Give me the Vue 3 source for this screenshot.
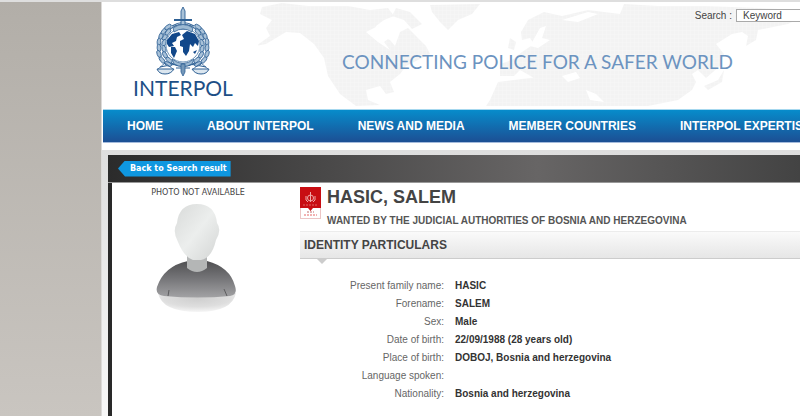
<script setup>
const menu = ['HOME', 'ABOUT INTERPOL', 'NEWS AND MEDIA', 'MEMBER COUNTRIES', 'INTERPOL EXPERTISE']
const facts = [
  ['Present family name:', 'HASIC'],
  ['Forename:', 'SALEM'],
  ['Sex:', 'Male'],
  ['Date of birth:', '22/09/1988 (28 years old)'],
  ['Place of birth:', 'DOBOJ, Bosnia and herzegovina'],
  ['Language spoken:', ''],
  ['Nationality:', 'Bosnia and herzegovina'],
]
const leaves = [
  [5, 29, 110], [3, 35, 95], [3, 41, 85], [3, 47, 70], [6, 53, 50], [12, 57, 25],
  [9, 30, 125], [8, 36, 110], [8, 42, 75], [9, 48, 60], [13, 53, 40], [8, 24, 130], [12, 20, 145], [12, 25, 130],
]
</script>

<template>
  <div class="site">
    <div class="page">
      <header class="header">
        <svg class="map" viewBox="0 0 542 104" preserveAspectRatio="xMinYMin slice" aria-hidden="true">
          <defs>
            <pattern id="dots" width="4" height="4" patternUnits="userSpaceOnUse">
              <rect width="4" height="4" fill="#f3f3f3" />
              <path d="M0 0H4M0 0V4" stroke="#f8f8f8" stroke-width="1" />
            </pattern>
          </defs>
          <g fill="url(#dots)">
            <path d="M4 5 L24 1 L50 4 L90 4 L112 8 L130 6 L136 14 L126 18 L118 24 L116 32 L132 38 L137 44 L142 30 L150 26 L158 34 L168 44 L172 52 L160 58 L148 64 L142 72 L132 80 L136 90 L128 92 L122 84 L108 88 L110 98 L122 103 L98 104 L82 92 L70 74 L66 56 L56 42 L42 31 L28 30 L8 42 L-2 44 L12 34 L8 26 L14 18 L2 12Z" />
            <path d="M138 6 L152 10 L164 22 L154 27 L146 18 L134 14Z" />
            <path d="M172 3 L222 2 L214 12 L200 18 L190 28 L182 20 L174 10Z" />
            <path d="M240 80 L232 98 L228 104 L390 104 L420 98 L434 88 L438 80 L434 72 L440 68 L448 76 L462 64 L466 52 L458 42 L474 32 L484 30 L490 34 L488 44 L498 38 L500 28 L530 22 L542 16 L542 8 L500 6 L448 4 L400 4 L366 2 L362 12 L330 8 L304 14 L286 10 L270 18 L263 30 L264 38 L272 36 L276 42 L264 50 L254 58 L242 62 L242 74 L256 74 L262 68 L276 76 L288 74Z" />
            <path d="M446 84 L460 78 L466 68 L464 80 L450 88ZM252 36 L258 40 L256 48 L250 46Z" />
          </g>
          <g fill="#fff">
            <path d="M108 30 L124 22 L134 34 L126 40 L132 48 L120 40Z" />
            <path d="M272 44 L282 26 L288 24 L284 36 L292 38 L280 46Z" />
            <path d="M304 74 L318 70 L322 76 L310 80ZM328 88 L338 92 L346 100 L332 98ZM304 18 L330 10 L340 12 L320 20Z" />
          </g>
        </svg>

        <a class="logo" href="#">
          <svg class="emblem" viewBox="0 0 54 70" aria-hidden="true">
            <g fill="none" stroke="#2e6094" stroke-width="1.2">
              <path d="M13 23 Q27 11 41 23 M16 19 Q27 12 38 19" />
              <path d="M15 56 Q27 63 39 56 M20 61 H34" />
              <path d="M4 60 Q27 54 50 60" />
            </g>
            <g v-for="side in [1, -1]" :key="side" :transform="side === 1 ? '' : 'translate(54 0) scale(-1 1)'">
              <ellipse
                v-for="([x, y, a], i) in leaves" :key="i" :cx="x" :cy="y" rx="3.8" ry="1.9"
                :transform="`rotate(${a} ${x} ${y})`" fill="#a9c2d9" stroke="#2e6094" stroke-width=".8"
              />
              <path d="M1 62 H18 Q15 67 9 67 Q3 67 1 62Z" fill="#dbe6ef" stroke="#2e6094" />
              <path d="M9 56 L2 62 M9 56 L17 62" stroke="#2e6094" stroke-width=".8" />
            </g>
            <circle cx="27" cy="38" r="17" fill="#fff" stroke="#6c93b8" />
            <path d="M16 52 Q27 61 38 52 L36 57 Q27 62 18 57Z" fill="#9dbad3" stroke="#2e6094" stroke-width=".8" />
            <path d="M25 4 L27 0 L29 4 V22 H25Z" fill="#a9c2d8" stroke="#2e6094" stroke-width=".9" />
            <path d="M18 12 H36 V14 H18Z" fill="#2e6094" />
            <path d="M17 21 Q27 14 37 21 L36 25 Q27 19 18 25Z" fill="#9dbad3" stroke="#2e6094" stroke-width=".8" />
            <path d="M25 57 H29 V65 L27 69 L25 65Z" fill="#7598b9" stroke="#2e6094" stroke-width=".8" />
            <g fill="#12488a">
              <path d="M11 33 L16 27 L23 25 L25 28 L21 30 L20 34 L16 36 L18 39 L13 40 L11 37Z" />
              <path d="M15 40 L19 40 L21 44 L18 51 L15 46Z" />
              <path d="M26 28 L31 24 L39 27 L43 34 L42 39 L39 36 L37 40 L34 37 L33 44 L30 49 L27 45 L27 40 L24 39 L24 34 L28 32Z" />
              <path d="M37 45 L41 43 L39 47Z" />
            </g>
          </svg>
          <span class="wordmark">INTERPOL</span>
        </a>

        <div class="header-main">
          <form class="search" @submit.prevent>
            <label for="keyword">Search :</label>
            <input id="keyword" type="text" value="Keyword">
          </form>
          <p class="tagline">CONNECTING POLICE FOR A SAFER WORLD</p>
        </div>
      </header>

      <nav class="nav">
        <a v-for="item in menu" :key="item" href="#">{{ item }}</a>
      </nav>

      <main class="panel">
        <div class="toolbar">
          <a class="back" href="#">Back to Search result</a>
        </div>
        <div class="record">
          <figure class="photo">
            <figcaption>PHOTO NOT AVAILABLE</figcaption>
            <svg viewBox="0 0 84 112" aria-hidden="true">
              <defs>
                <linearGradient id="head" x1="0" y1="0" x2="1" y2="1">
                  <stop offset="0" stop-color="#d8dad9" />
                  <stop offset=".5" stop-color="#eceeed" />
                  <stop offset="1" stop-color="#d3d5d4" />
                </linearGradient>
                <linearGradient id="coat" x1="0" y1="0" x2="0" y2="1">
                  <stop offset="0" stop-color="#505052" />
                  <stop offset=".5" stop-color="#77777a" />
                  <stop offset="1" stop-color="#a2a2a4" />
                </linearGradient>
                <radialGradient id="floor" cx=".5" cy=".3" r=".7">
                  <stop offset="0" stop-color="#cfcfcf" />
                  <stop offset=".6" stop-color="#dedede" />
                  <stop offset="1" stop-color="#f6f6f6" />
                </radialGradient>
              </defs>
              <path d="M2 90 Q6 109 42 109 Q76 109 80 90Z" fill="url(#floor)" />
              <path d="M32 58 Q8 63 1 84 Q-1 92 8 93 Q42 96 74 93 Q82 92 79 83 Q74 64 51 58Z" fill="url(#coat)" />
              <path d="M13 87 L12 93 M68 86 L71 93" stroke="#5d5d5f" />
              <path d="M31 48 H51 V65 Q41 73 31 65Z" fill="#b4b6b6" />
              <path d="M41 1 Q59 1 61 20 Q66 27 60 37 Q56 55 45 57 H37 Q28 54 22 39 Q16 28 21 20 Q23 1 41 1Z" fill="url(#head)" />
            </svg>
          </figure>

          <article class="details">
            <div class="title">
              <svg class="notice" viewBox="0 0 21 32" aria-hidden="true">
                <rect x=".5" y=".5" width="20" height="31" fill="#fff" stroke="#ecc5c5" />
                <path d="M0 0H21V21H13L10.500 24L8 21H0Z" fill="#c80d12" />
                <g fill="none" stroke="#efaaa9">
                  <circle cx="10.500" cy="11" r="3" />
                  <path d="M10.500 5V15M6 9Q5 14 8 15M15 9Q16 14 13 15" />
                  <path d="M3 18H18" stroke="#df6664" stroke-dasharray="2 1" />
                  <path d="M7 25H14" stroke="#c06c6c" stroke-dasharray="2 1" />
                  <path d="M4 28H17" stroke="#e76666" stroke-dasharray="2 1" />
                </g>
              </svg>
              <div>
                <h1>HASIC, SALEM</h1>
                <p class="wanted">WANTED BY THE JUDICIAL AUTHORITIES OF BOSNIA AND HERZEGOVINA</p>
              </div>
            </div>
            <h2>IDENTITY PARTICULARS</h2>
            <table class="facts">
              <tbody>
                <tr v-for="[label, value] in facts" :key="label">
                  <th scope="row">{{ label }}</th>
                  <td>{{ value }}</td>
                </tr>
              </tbody>
            </table>
          </article>
        </div>
      </main>
    </div>
  </div>
</template>

<style>
body {
  background: #c9c5c0;
  overflow: hidden;
}
</style>

<style scoped>
.site {
  box-sizing: border-box;
  min-height: 100vh;
  display: flex;
  padding-left: 101px;
  border-top: 2px solid #dedede;
  background: linear-gradient(#b2aea8, #c9c5c0);
  font-family: "Liberation Sans", Arial, sans-serif;
  color: #444;
}
a {
  color: inherit;
  text-decoration: none;
}
h1, h2, p, figure {
  margin: 0;
}
.page {
  flex: 1;
  min-width: 0;
  display: flex;
  flex-direction: column;
  overflow: hidden;
  background: #fff;
  border-left: 1px solid #dcdad8;
}
.header {
  position: relative;
  display: flex;
  height: 107px;
}
.map {
  position: absolute;
  left: 156px;
  right: 0;
  top: 0;
  height: 104px;
  width: calc(100% - 156px);
}
.logo {
  position: relative;
  display: flex;
  flex-direction: column;
  align-items: center;
  width: 162px;
  padding-top: 5px;
  color: #1d4f86;
}
.emblem {
  width: 54px;
  height: 70px;
}
.wordmark {
  font: 21px/22px Lato, sans-serif;
}
.header-main {
  position: relative;
  flex: 1;
  min-width: 0;
}
.search {
  display: flex;
  justify-content: flex-end;
  align-items: center;
  gap: 4px;
  padding-top: 7px;
  font-size: 10px;
  line-height: 12px;
}
.search input {
  box-sizing: border-box;
  width: 66px;
  height: 13px;
  margin-right: -2px;
  padding: 0 6px;
  border: 1px solid #aaa;
  background: #fff;
  color: #444;
  font: inherit;
}
.tagline {
  padding: 26px 0 0 78px;
  white-space: nowrap;
  color: #6c93c0;
  font: 19px/28px Lato, sans-serif;
}
.nav {
  display: flex;
  align-items: center;
  gap: 44px;
  height: 32px;
  margin-left: 1px;
  padding-left: 24px;
  border-top: 1px solid #a6d8ef;
  border-bottom: 1px solid #a4bbdc;
  background: linear-gradient(#078ccb, #1c4f94);
  color: #fff;
  font-size: 12px;
  font-weight: bold;
  white-space: nowrap;
}
.panel {
  flex: 1;
  display: flex;
  flex-direction: column;
  margin-top: 7px;
  padding: 5px 0 0 6px;
  background: linear-gradient(#dedede, #f8f8f8);
}
.toolbar {
  display: flex;
  align-items: center;
  height: 27px;
  padding-left: 10px;
  border-bottom: 1px solid #999;
  background: linear-gradient(90deg, #2b2b2b, #676565 62%, #434343);
}
.back {
  padding: 0 4px 0 12px;
  background: #0f97e0;
  clip-path: polygon(0 50%, 7px 0, 100% 0, 100% 100%, 7px 100%);
  color: #fff;
  font: bold 8px/16px "DejaVu Sans", sans-serif;
}
.record {
  flex: 1;
  display: flex;
  border-left: 4px solid #292929;
  background: #fff;
}
.photo {
  display: flex;
  flex-direction: column;
  align-items: center;
  width: 172px;
  padding-top: 3px;
}
.photo figcaption {
  font: 8px/14px "DejaVu Sans", sans-serif;
}
.photo svg {
  width: 84px;
  height: 112px;
  margin-top: 3px;
}
.details {
  flex: 1;
  min-width: 0;
  padding: 4px 0 0 16px;
}
.title {
  display: flex;
  gap: 6px;
}
.notice {
  flex: none;
  width: 21px;
  height: 32px;
}
h1 {
  font-size: 18px;
  line-height: 20px;
}
.wanted {
  padding-top: 7px;
  font-size: 10px;
  line-height: 14px;
  font-weight: bold;
  color: #555;
  white-space: nowrap;
}
h2 {
  position: relative;
  margin-top: 3px;
  padding-left: 4px;
  border-top: 1px solid #ececec;
  border-bottom: 1px solid #ccc;
  background: linear-gradient(#fafafa, #e6e6e6);
  font-size: 12px;
  line-height: 26px;
}
h2::after {
  content: "";
  position: absolute;
  left: 16px;
  top: 100%;
  width: 12px;
  height: 6px;
  background: #ccc;
  clip-path: polygon(0 0, 100% 0, 50% 100%);
}
.facts {
  margin-top: 18px;
  border-collapse: collapse;
  font-size: 10px;
  line-height: 18px;
}
.facts th {
  width: 144px;
  padding: 0;
  text-align: right;
  font-weight: normal;
  color: #666;
}
.facts td {
  padding: 0 0 0 11px;
  font-weight: bold;
  color: #333;
}
</style>
